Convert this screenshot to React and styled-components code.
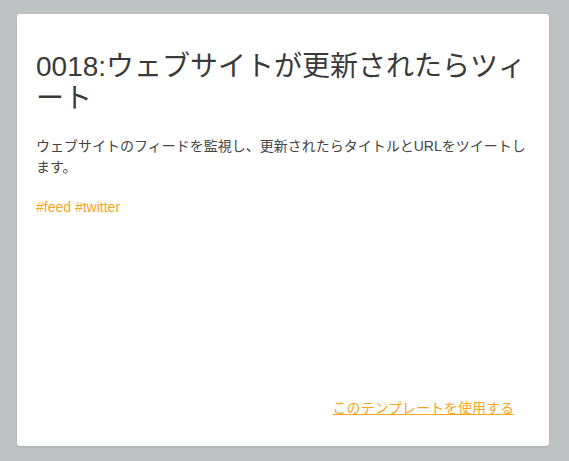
import React from "react";
import styled, { createGlobalStyle } from "styled-components";

const GlobalStyle = createGlobalStyle`
  html, body, #root {
    height: 100%;
  }
  body {
    margin: 0;
    background: #bec2c3;
    font-family: "Liberation Sans", Arial, "Noto Sans CJK JP", sans-serif;
  }
  * {
    box-sizing: border-box;
  }
`;

const Page = styled.div`
  height: 100%;
  padding: 14px 20px 15px 17px;
`;

const Card = styled.div`
  height: 100%;
  display: flex;
  flex-direction: column;
  background: #fff;
  border-radius: 3px;
  box-shadow: 0 1px 2px rgba(0, 0, 0, 0.12);
  padding: 20px 19px 20px 19px;
`;

const Title = styled.h1`
  margin: 17px 0 0;
  font-size: 28px;
  font-weight: normal;
  line-height: 32px;
  color: #3a3a3a;
`;

const Description = styled.p`
  margin: 21px 0 0;
  font-size: 14px;
  line-height: 21px;
  color: #444;
`;

const Tags = styled.div`
  margin-top: 19px;
  font-size: 14px;
  line-height: 21px;
  color: #f5a623;
`;

const Footer = styled.div`
  margin-top: auto;
  margin-bottom: 7px;
  padding-right: 16px;
  text-align: right;
`;

const UseLink = styled.a`
  font-size: 14px;
  line-height: 22px;
  color: #f5a623;
  text-decoration: underline;
  cursor: pointer;
`;

export default function App() {
  const tags = ["feed", "twitter"];
  return (
    <>
      <GlobalStyle />
      <Page>
        <Card>
          <Title>0018:ウェブサイトが更新されたらツィート</Title>
          <Description>
            ウェブサイトのフィードを監視し、更新されたらタイトルとURLをツイートします。
          </Description>
          <Tags>{tags.map((t) => `#${t}`).join(" ")}</Tags>
          <Footer>
            <UseLink>このテンプレートを使用する</UseLink>
          </Footer>
        </Card>
      </Page>
    </>
  );
}
